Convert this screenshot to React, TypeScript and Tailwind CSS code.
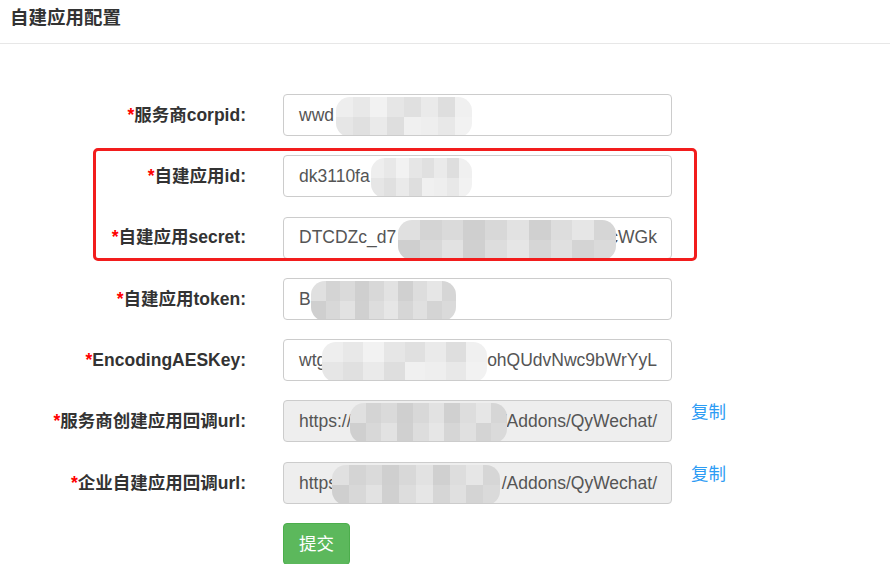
import React from "react";

const FONT = { fontFamily: '"Liberation Sans", Arial, "Noto Sans CJK SC", sans-serif' };

function Blur({ left, width, blocks }: { left: number; width: number; blocks: string[] }) {
  return (
    <div
      className="absolute top-[2px] h-[40px] flex overflow-hidden rounded-[14px] blur-[0.6px]"
      style={{ left, width }}
    >
      {blocks.map((c, i) => (
        <div key={i} className="h-full flex flex-col flex-1">
          <div className="flex-1" style={{ background: c }} />
          <div className="flex-1" style={{ background: blocks[(i + 3) % blocks.length] }} />
        </div>
      ))}
    </div>
  );
}

type Row = {
  label: string;
  left: string;
  right?: string;
  disabled?: boolean;
  copy?: boolean;
  blur: { left: number; width: number; blocks: string[] };
};

const g1 = ["#eeeeee", "#e8e8e8", "#f2f2f2", "#e6e6e6", "#e0e0e0", "#eaeaea", "#dedede", "#f0f0f0"];
const g2 = ["#e0e0e0", "#d4d4d4", "#dadada", "#cfcfcf", "#d8d8d8", "#e2e2e2", "#d0d0d0", "#dddddd", "#e6e6e6", "#d6d6d6"];

const rows: Row[] = [
  { label: "服务商corpid:", left: "wwd", blur: { left: 52, width: 136, blocks: g1 } },
  { label: "自建应用id:", left: "dk3110fa", blur: { left: 87, width: 101, blocks: g1 } },
  { label: "自建应用secret:", left: "DTCDZc_d7", right: "icWGk", blur: { left: 114, width: 218, blocks: g2 } },
  { label: "自建应用token:", left: "B", blur: { left: 27, width: 145, blocks: g2 } },
  { label: "EncodingAESKey:", left: "wtg", right: "ohQUdvNwc9bWrYyL", blur: { left: 38, width: 165, blocks: g1 } },
  { label: "服务商创建应用回调url:", left: "https://", right: "./Addons/QyWechat/", disabled: true, copy: true, blur: { left: 66, width: 157, blocks: g2 } },
  { label: "企业自建应用回调url:", left: "https", right: "/Addons/QyWechat/", disabled: true, copy: true, blur: { left: 48, width: 168, blocks: g2 } },
];

export default function App() {
  return (
    <div className="w-[890px] h-[564px] bg-white overflow-hidden relative text-[#333]" style={FONT}>
      <div className="h-[44px] border-b border-[#e7e7e7] pl-[10px] pt-[6px]">
        <div className="text-[18.5px] font-bold leading-[24px] text-[#333]">自建应用配置</div>
      </div>
      <div className="pt-[50px] flex flex-col gap-[19.3px]">
        {rows.map((r, i) => (
          <div key={i} className="flex">
            <div className="w-[246px] h-[42px] flex items-center justify-end text-[17.5px] font-bold text-[#333] whitespace-nowrap">
              <span className="text-[#ff0000]">*</span>
              {r.label}
            </div>
            <div
              className={`ml-[37px] relative w-[389px] h-[42px] rounded-[4px] border border-[#cccccc] flex items-center justify-between pl-[15px] pr-[14px] overflow-hidden text-[17.5px] text-[#555] whitespace-nowrap ${
                r.disabled ? "bg-[#eeeeee]" : "bg-white"
              }`}
            >
              <span>{r.left}</span>
              {r.right && <span>{r.right}</span>}
              <Blur {...r.blur} />
            </div>
            {r.copy && (
              <div className="ml-[19px] text-[17.5px] leading-[22px] text-[#2d9cf4] mt-[1px]">复制</div>
            )}
          </div>
        ))}
        <div className="flex">
          <div className="ml-[283px] w-[67px] h-[42px] rounded-[4px] bg-[#5cb85c] border border-[#4cae4c] text-white text-[17.5px] flex items-center justify-center">
            提交
          </div>
        </div>
      </div>
      <div className="absolute left-[93px] top-[148px] w-[604px] h-[113px] border-[3px] border-[#f21d1d] rounded-[5px] pointer-events-none" />
    </div>
  );
}
